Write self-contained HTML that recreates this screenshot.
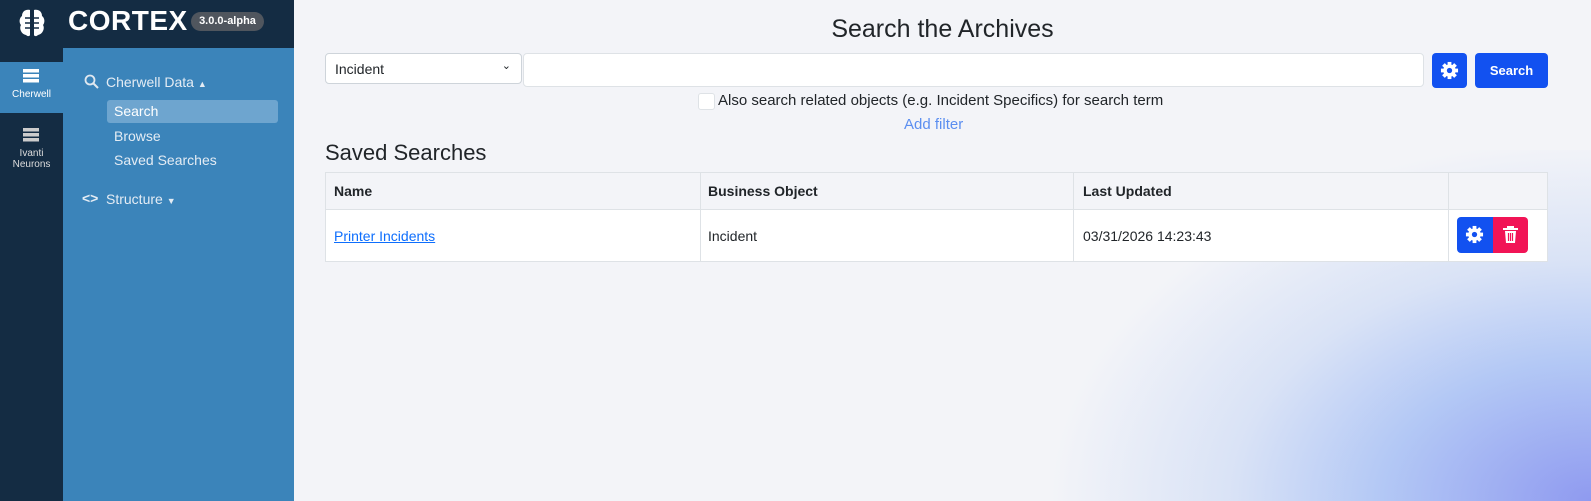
<!DOCTYPE html>
<html style="width:1591px;height:501px;overflow:hidden;background:#f3f4f8"><head><style>
*{box-sizing:border-box;margin:0;padding:0}
body{width:1591px;height:501px;overflow:hidden;font-family:"Liberation Sans",sans-serif;background:#f3f4f8;position:relative}
.glow{position:absolute;left:1000px;top:150px;width:591px;height:351px;background:radial-gradient(ellipse 600px 400px at 100% 100%,#8f9af0 0%,#b3c8f5 35%,rgba(200,215,245,.6) 60%,rgba(243,244,248,0) 90%)}
.rail{position:absolute;left:0;top:0;width:63px;height:501px;background:#142c43}
.top{position:absolute;left:0;top:0;width:294px;height:48px;background:#142c43}
.side{position:absolute;left:63px;top:48px;width:231px;height:453px;background:#3b84ba}
.t{position:absolute;white-space:nowrap}
.btn{position:absolute;background:#1251f0;border-radius:4px;color:#fff}
</style></head><body>
<div class="glow"></div>
<div class="rail"></div><div class="top"></div><div class="side"></div>
<svg class="t" style="left:17px;top:7px" width="30" height="32" viewBox="0 0 30 32"><path d="M13 3C8 2 5 5 5 9 2 11 2 16 4 18 2 21 4 27 9 28 11 30 13 29 13 28ZM17 3C22 2 25 5 25 9 28 11 28 16 26 18 28 21 26 27 21 28 19 30 17 29 17 28Z" fill="#fff"/><path d="M8 11h5M8 16h5M8 21h5M17 11h5M17 16h5M17 21h5" stroke="#142c43" stroke-width="1.5"/></svg>
<div class="t" style="left:68px;top:5px;color:#fff;font-size:28px;font-weight:bold;letter-spacing:.5px">CORTEX</div>
<div class="t" style="left:191px;top:12px;width:73px;height:19px;border-radius:10px;background:#50565e;color:#fff;font-size:11px;font-weight:bold;text-align:center;line-height:19px">3.0.0-alpha</div>
<div class="t" style="left:0;top:62px;width:63px;height:51px;background:#3b84ba"></div>
<svg class="t" style="left:23px;top:69px" width="16" height="14"><rect x="0" y="0" width="16" height="3.5" fill="#fff"/><rect x="0" y="5" width="16" height="3.5" fill="#fff"/><rect x="0" y="10" width="16" height="3.5" fill="#fff"/></svg>
<div class="t" style="left:0;top:89px;width:63px;text-align:center;color:#fff;font-size:10px">Cherwell</div>
<svg class="t" style="left:23px;top:128px" width="16" height="14"><rect x="0" y="0" width="16" height="3.5" fill="#ccc"/><rect x="0" y="5" width="16" height="3.5" fill="#ccc"/><rect x="0" y="10" width="16" height="3.5" fill="#ccc"/></svg>
<div class="t" style="left:0;top:148px;width:63px;text-align:center;color:#ddd;font-size:10px;line-height:11px">Ivanti<br>Neurons</div>
<svg class="t" style="left:84px;top:74px" width="15" height="15"><circle cx="6" cy="6" r="4.5" stroke="#e0e8f0" stroke-width="1.8" fill="none"/><path d="M9.5 9.5L14 14" stroke="#e0e8f0" stroke-width="2"/></svg>
<div class="t" style="left:106px;top:74px;color:#e4ecf4;font-size:14px">Cherwell Data <span style="font-size:9px">▲</span></div>
<div class="t" style="left:107px;top:100px;width:171px;height:23px;background:#6ea5cf;border-radius:3px"></div>
<div class="t" style="left:114px;top:103px;color:#fff;font-size:14px">Search</div>
<div class="t" style="left:114px;top:128px;color:#e4ecf4;font-size:14px">Browse</div>
<div class="t" style="left:114px;top:152px;color:#e4ecf4;font-size:14px">Saved Searches</div>
<div class="t" style="left:82px;top:190px;color:#e4ecf4;font-size:14px;font-weight:bold">&lt;&gt;</div>
<div class="t" style="left:106px;top:191px;color:#e4ecf4;font-size:14px">Structure <span style="font-size:9px">▼</span></div>
<div class="t" style="left:294px;top:15px;width:1297px;text-align:center;font-size:25px;color:#212529">Search the Archives</div>
<div class="t" style="left:325px;top:53px;width:197px;height:31px;background:#fff;border:1px solid #ced4da;border-radius:4px;font-size:14px;padding:7px 9px;color:#212529">Incident<span style="position:absolute;right:10px;top:5px;font-size:11px">&#8964;</span></div>
<div class="t" style="left:523px;top:53px;width:901px;height:34px;background:#fff;border:1px solid #dee2e6;border-radius:4px"></div>
<div class="btn" style="left:1432px;top:53px;width:35px;height:35px"><svg style="position:absolute;left:8px;top:8px" width="19" height="19" viewBox="-10 -10 20 20"><g fill="#fff"><circle r="6.5"/><rect x="-2" y="-9" width="4" height="18"/><rect x="-2" y="-9" width="4" height="18" transform="rotate(45)"/><rect x="-2" y="-9" width="4" height="18" transform="rotate(90)"/><rect x="-2" y="-9" width="4" height="18" transform="rotate(135)"/></g><circle r="2.8" fill="#1251f0"/></svg></div>
<div class="btn" style="left:1475px;top:53px;width:73px;height:35px;font-size:13px;font-weight:bold;text-align:center;line-height:35px">Search</div>
<div class="t" style="left:698px;top:93px;width:17px;height:17px;background:#fff;border:1px solid #dee2e6;border-radius:3px"></div>
<div class="t" style="left:718px;top:92px;font-size:15px;color:#212529">Also search related objects (e.g. Incident Specifics) for search term</div>
<div class="t" style="left:904px;top:116px;font-size:15px;color:#5b8ef0">Add filter</div>
<div class="t" style="left:325px;top:140px;font-size:22px;color:#212529">Saved Searches</div>
<div class="t" style="left:325px;top:172px;width:1223px;height:90px;border:1px solid #dee2e6;background:#fff"></div>
<div class="t" style="left:326px;top:173px;width:1221px;height:37px;background:#f3f4f8;border-bottom:1px solid #dee2e6"></div>
<div class="t" style="left:700px;top:173px;width:1px;height:88px;background:#dee2e6"></div>
<div class="t" style="left:1073px;top:173px;width:1px;height:88px;background:#dee2e6"></div>
<div class="t" style="left:1448px;top:173px;width:1px;height:88px;background:#dee2e6"></div>
<div class="t" style="left:334px;top:183px;font-size:14px;font-weight:bold;color:#212529">Name</div>
<div class="t" style="left:708px;top:183px;font-size:14px;font-weight:bold;color:#212529">Business Object</div>
<div class="t" style="left:1083px;top:183px;font-size:14px;font-weight:bold;color:#212529">Last Updated</div>
<div class="t" style="left:334px;top:228px;font-size:14px;color:#0d6efd;text-decoration:underline">Printer Incidents</div>
<div class="t" style="left:708px;top:228px;font-size:14px;color:#212529">Incident</div>
<div class="t" style="left:1083px;top:228px;font-size:14px;color:#212529">03/31/2026 14:23:43</div>
<div class="btn" style="left:1457px;top:217px;width:36px;height:36px;border-radius:4px 0 0 4px"><svg style="position:absolute;left:8px;top:8px" width="19" height="19" viewBox="-10 -10 20 20"><g fill="#fff"><circle r="6.5"/><rect x="-2" y="-9" width="4" height="18"/><rect x="-2" y="-9" width="4" height="18" transform="rotate(45)"/><rect x="-2" y="-9" width="4" height="18" transform="rotate(90)"/><rect x="-2" y="-9" width="4" height="18" transform="rotate(135)"/></g><circle r="2.8" fill="#1251f0"/></svg></div>
<div class="btn" style="left:1493px;top:217px;width:35px;height:36px;background:#f11456;border-radius:0 4px 4px 0"><svg style="position:absolute;left:9px;top:9px" width="17" height="18" viewBox="0 0 17 18"><path d="M1 3h15M6 3V1h5v2" stroke="#fff" stroke-width="2" fill="none"/><path d="M3 5h11l-1 12H4z" fill="#fff"/><path d="M6.5 7v8M8.5 7v8M10.5 7v8" stroke="#f11456" stroke-width="1.2"/></svg></div>
</body></html>
